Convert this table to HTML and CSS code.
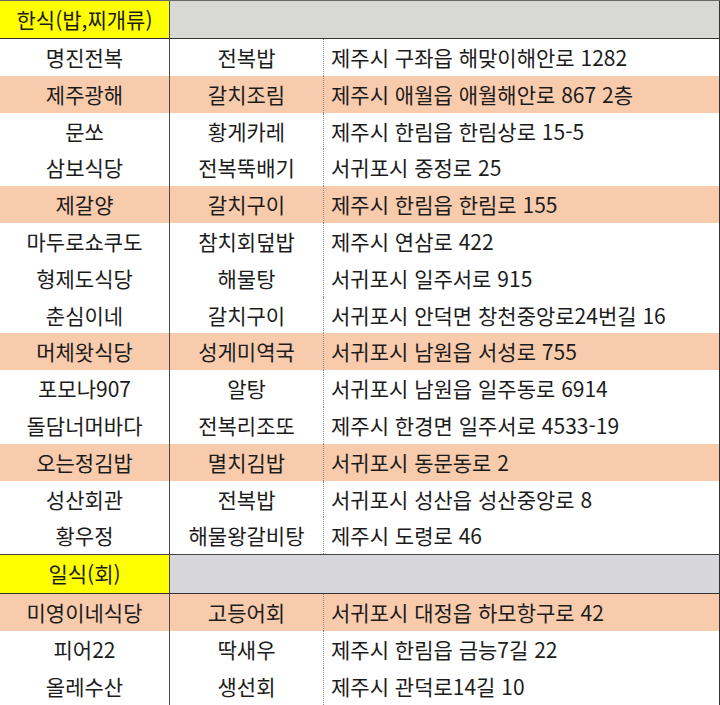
FILE: index.html
```html
<!DOCTYPE html>
<html lang="ko">
<head>
<meta charset="utf-8">
<title>제주 맛집</title>
<link rel="stylesheet" href="styles.css">
</head>
<body>
<div class="sheet">
  <div class="row head first">
    <div class="c1 yellow">한식(밥,찌개류)</div>
    <div class="span gray"></div>
  </div>
  <div class="row"><div class="c1">명진전복</div><div class="c2">전복밥</div><div class="c3">제주시 구좌읍 해맞이해안로 1282</div></div>
  <div class="row peach"><div class="c1">제주광해</div><div class="c2">갈치조림</div><div class="c3">제주시 애월읍 애월해안로 867 2층</div></div>
  <div class="row"><div class="c1">문쏘</div><div class="c2">황게카레</div><div class="c3">제주시 한림읍 한림상로 15-5</div></div>
  <div class="row"><div class="c1">삼보식당</div><div class="c2">전복뚝배기</div><div class="c3">서귀포시 중정로 25</div></div>
  <div class="row peach"><div class="c1">제갈양</div><div class="c2">갈치구이</div><div class="c3">제주시 한림읍 한림로 155</div></div>
  <div class="row"><div class="c1">마두로쇼쿠도</div><div class="c2">참치회덮밥</div><div class="c3">제주시 연삼로 422</div></div>
  <div class="row"><div class="c1">형제도식당</div><div class="c2">해물탕</div><div class="c3">서귀포시 일주서로 915</div></div>
  <div class="row"><div class="c1">춘심이네</div><div class="c2">갈치구이</div><div class="c3">서귀포시 안덕면 창천중앙로24번길 16</div></div>
  <div class="row peach"><div class="c1">머체왓식당</div><div class="c2">성게미역국</div><div class="c3">서귀포시 남원읍 서성로 755</div></div>
  <div class="row"><div class="c1">포모나907</div><div class="c2">알탕</div><div class="c3">서귀포시 남원읍 일주동로 6914</div></div>
  <div class="row"><div class="c1">돌담너머바다</div><div class="c2">전복리조또</div><div class="c3">제주시 한경면 일주서로 4533-19</div></div>
  <div class="row peach"><div class="c1">오는정김밥</div><div class="c2">멸치김밥</div><div class="c3">서귀포시 동문동로 2</div></div>
  <div class="row"><div class="c1">성산회관</div><div class="c2">전복밥</div><div class="c3">서귀포시 성산읍 성산중앙로 8</div></div>
  <div class="row"><div class="c1">황우정</div><div class="c2">해물왕갈비탕</div><div class="c3">제주시 도령로 46</div></div>
  <div class="row head second">
    <div class="c1 yellow">일식(회)</div>
    <div class="span gray2"></div>
  </div>
  <div class="row peach"><div class="c1">미영이네식당</div><div class="c2">고등어회</div><div class="c3">서귀포시 대정읍 하모항구로 42</div></div>
  <div class="row"><div class="c1">피어22</div><div class="c2">딱새우</div><div class="c3">제주시 한림읍 금능7길 22</div></div>
  <div class="row"><div class="c1">올레수산</div><div class="c2">생선회</div><div class="c3">제주시 관덕로14길 10</div></div>
</div>
</body>
</html>
```

FILE: styles.css
```css
html, body {
  margin: 0;
  padding: 0;
  background: #ffffff;
}

.sheet {
  width: 720px;
  height: 705px;
  overflow: hidden;
  font-family: "Noto Sans CJK KR", "Noto Sans", sans-serif;
  font-size: 21px;
  color: #1c1c1c;
  border-top: 1px solid #6a6a6a;
  box-sizing: border-box;
}

.row {
  display: grid;
  grid-template-columns: 170px 154px 396px;
  height: 36.8px;
  line-height: 36.8px;
}

.row > div {
  box-sizing: border-box;
  white-space: nowrap;
}

.c1 {
  text-align: center;
  border-right: 1px solid #4a4a4a;
}

.c2 {
  text-align: center;
  border-right: 1px dotted #8a8a8a;
}

.c3 {
  padding-left: 7px;
  border-right: 1px solid #333333;
}

.peach {
  background: #f8cbad;
}

.head {
  height: 37px;
  line-height: 36px;
  border-bottom: 1px solid #333333;
}

.head.second {
  height: 38px;
  border-top: 1px solid #444444;
}

.span {
  grid-column: 2 / 4;
  border-right: 1px solid #333333;
}

.yellow {
  background: #ffff00;
}

.gray {
  background: #d8d9d6;
}

.gray2 {
  background: #d7d6db;
}
```
